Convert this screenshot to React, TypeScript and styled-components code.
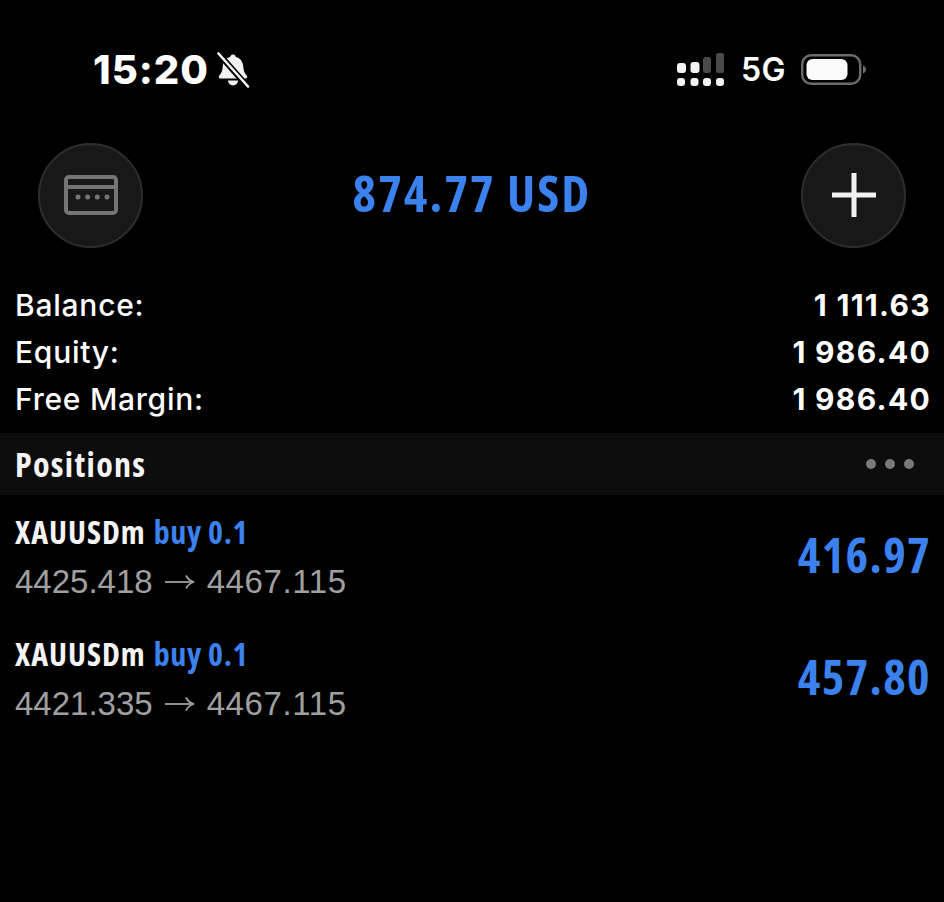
import React from "react";
import styled, { createGlobalStyle } from "styled-components";

const Global = createGlobalStyle`
  html, body { margin: 0; padding: 0; background: #000; }
  body { font-family: "Liberation Sans", Arial, sans-serif; }
`;

const Page = styled.div`
  width: 944px;
  height: 902px;
  background: #000;
  color: #fff;
  overflow: hidden;
`;

const StatusBar = styled.div`
  height: 142px;
  box-sizing: border-box;
  padding: 48px 77px 0 93px;
  display: flex;
  justify-content: space-between;
  align-items: flex-start;
`;

const StatusGroup = styled.div`
  display: flex;
  align-items: center;
  height: 44px;
`;

const Time = styled.span`
  font-family: "Inter", sans-serif;
  font-weight: 800;
  font-size: 40px;
  letter-spacing: 1px;
  line-height: 44px;
  color: #fff;
  margin-right: 7px;
`;

const Network = styled.span`
  font-family: "Inter", sans-serif;
  font-weight: 600;
  font-size: 32px;
  letter-spacing: 0.5px;
  line-height: 44px;
  margin: 0 15px 0 16px;
`;

const Header = styled.div`
  height: 106px;
  padding: 0 38px;
  display: flex;
  align-items: center;
  justify-content: space-between;
`;

const RoundButton = styled.div`
  width: 105px;
  height: 105px;
  box-sizing: border-box;
  border-radius: 50%;
  background: #181818;
  border: 2px solid #2e2e2e;
  display: flex;
  align-items: center;
  justify-content: center;
`;

const Total = styled.div`
  font-family: "Open Sans", sans-serif;
  font-stretch: 75%;
  font-weight: 700;
  font-size: 50px;
  letter-spacing: 2.2px;
  line-height: 60px;
  color: #3b82ee;
  margin-bottom: 4px;
`;

const Summary = styled.div`
  margin-top: 33px;
  padding: 0 13px 0 15px;
  display: flex;
  flex-direction: column;
`;

const SummaryRow = styled.div`
  height: 47px;
  display: flex;
  align-items: center;
  justify-content: space-between;
  font-family: "Inter", sans-serif;
  font-size: 30px;
  letter-spacing: 0.75px;
  font-weight: 500;
`;

const Amount = styled.span`
  font-weight: 700;
  letter-spacing: 1.3px;
`;

const SectionBand = styled.div`
  margin-top: 11px;
  height: 62px;
  background: #0d0d0d;
  padding: 0 30px 0 15px;
  display: flex;
  align-items: center;
  justify-content: space-between;
`;

const SectionTitle = styled.span`
  font-family: "Open Sans", sans-serif;
  font-stretch: 75%;
  font-weight: 700;
  font-size: 34px;
  letter-spacing: 1.3px;
  color: #f4f4f4;
`;

const Dots = styled.div`
  display: flex;
  gap: 9px;
`;

const Dot = styled.span`
  width: 10px;
  height: 10px;
  border-radius: 50%;
  background: #7a7a7a;
`;

const PositionList = styled.div`
  padding: 1px 13px 0 15px;
  display: flex;
  flex-direction: column;
`;

const PositionRow = styled.div`
  height: 122px;
  display: flex;
  align-items: center;
  justify-content: space-between;
`;

const PositionInfo = styled.div`
  display: flex;
  flex-direction: column;
`;

const PositionTitle = styled.div`
  font-family: "Open Sans", sans-serif;
  font-stretch: 75%;
  font-weight: 700;
  font-size: 32px;
  letter-spacing: 1px;
  line-height: 48px;
  margin-bottom: 2px;
  color: #f4f4f4;
`;

const BuyTag = styled.span`
  color: #3b82ee;
  letter-spacing: 0.6px;
  margin-left: 8px;
`;

const Prices = styled.div`
  font-family: "Liberation Sans", sans-serif;
  font-weight: 400;
  font-size: 33px;
  line-height: 48px;
  color: #a0a0a0;
  display: flex;
  align-items: center;
  gap: 12px;
`;

const ClosePrice = styled.span`
  letter-spacing: 0.6px;
`;

const Profit = styled.div`
  font-family: "Open Sans", sans-serif;
  font-stretch: 75%;
  font-weight: 700;
  font-size: 48px;
  letter-spacing: 1.4px;
  color: #3b82ee;
  margin-bottom: 6px;
`;

const BellOff = () => (
  <svg width="34" height="36" viewBox="0 0 34 36">
    <path d="M17 2.500c1.600 0 2.600 1 2.800 2.400 4.900 1.200 7.200 5 7.500 9.800.2 4 1.200 6.400 3.400 8.800 1.200 1.400.4 3-1.400 3H4.700c-1.800 0-2.600-1.600-1.400-3 2.200-2.400 3.200-4.800 3.400-8.800.3-4.800 2.600-8.600 7.500-9.800C14.400 3.500 15.400 2.500 17 2.500z" fill="#f2f2f2" />
    <path d="M12 28.500h10a5 5 0 0 1-10 0z" fill="#f2f2f2" />
    <path d="M2 1 L32 35" stroke="#000" strokeWidth="6" />
    <path d="M2.500 1.500 L32 34.500" stroke="#f2f2f2" strokeWidth="2.600" strokeLinecap="round" />
  </svg>
);

const Signal = () => (
  <svg width="48" height="36" viewBox="0 0 48 36" fill="#f2f2f2">
    <rect x="0" y="11" width="9" height="10" rx="3" />
    <rect x="13.500" y="10" width="9" height="11" rx="3" />
    <rect x="26" y="5" width="8" height="16" rx="2.500" fill="#4a4a4a" />
    <rect x="39" y="1" width="8" height="20" rx="2.500" fill="#4a4a4a" />
    <rect x="0" y="26" width="8" height="8" rx="3" />
    <rect x="13.500" y="26" width="8" height="8" rx="3" />
    <rect x="26" y="26" width="8" height="8" rx="3" />
    <rect x="39" y="26" width="8" height="8" rx="3" />
  </svg>
);

const Battery = () => (
  <svg width="66" height="32" viewBox="0 0 66 32">
    <rect x="1.200" y="1.200" width="58" height="28.600" rx="9" fill="none" stroke="#6c6c6c" strokeWidth="2.400" />
    <rect x="5.500" y="5" width="41" height="21" rx="6" fill="#fafafa" />
    <path d="M62 11.500c2.200 1 3 2.400 3 4s-.8 3-3 4z" fill="#6c6c6c" />
  </svg>
);

const CardIcon = () => (
  <svg width="54" height="40" viewBox="0 0 54 40">
    <rect x="2" y="2" width="50" height="36" rx="3" fill="none" stroke="#757575" strokeWidth="4" />
    <rect x="2" y="10" width="50" height="4" fill="#757575" />
    <g fill="#757575">
      <circle cx="14" cy="22" r="2.500" />
      <circle cx="23.700" cy="22" r="2.500" />
      <circle cx="33.300" cy="22" r="2.500" />
      <circle cx="43" cy="22" r="2.500" />
    </g>
  </svg>
);

const PlusIcon = () => (
  <svg width="44" height="44" viewBox="0 0 44 44">
    <rect x="19.500" y="0" width="5" height="44" fill="#f2f2f2" />
    <rect x="0" y="19.500" width="44" height="5" fill="#f2f2f2" />
  </svg>
);

const ArrowIcon = () => (
  <svg width="30" height="18" viewBox="0 0 30 18" fill="none" stroke="#a0a0a0" strokeWidth="1.800">
    <path d="M0 9h29" />
    <path d="M21 2.500c1.500 3 4 5.500 8 6.500-4 1-6.500 3.500-8 6.500" />
  </svg>
);

const summary = [
  ["Balance:", "1 111.63"],
  ["Equity:", "1 986.40"],
  ["Free Margin:", "1 986.40"],
];

const positions = [
  { open: "4425.418", close: "4467.115", profit: "416.97" },
  { open: "4421.335", close: "4467.115", profit: "457.80" },
];

export default function App() {
  return (
    <Page>
      <Global />
      <StatusBar>
        <StatusGroup>
          <Time>15:20</Time>
          <BellOff />
        </StatusGroup>
        <StatusGroup>
          <Signal />
          <Network>5G</Network>
          <Battery />
        </StatusGroup>
      </StatusBar>
      <Header>
        <RoundButton>
          <CardIcon />
        </RoundButton>
        <Total>874.77 USD</Total>
        <RoundButton>
          <PlusIcon />
        </RoundButton>
      </Header>
      <Summary>
        {summary.map(([label, value]) => (
          <SummaryRow key={label}>
            <span>{label}</span>
            <Amount>{value}</Amount>
          </SummaryRow>
        ))}
      </Summary>
      <SectionBand>
        <SectionTitle>Positions</SectionTitle>
        <Dots>
          <Dot />
          <Dot />
          <Dot />
        </Dots>
      </SectionBand>
      <PositionList>
        {positions.map((p) => (
          <PositionRow key={p.open}>
            <PositionInfo>
              <PositionTitle>
                XAUUSDm<BuyTag>buy 0.1</BuyTag>
              </PositionTitle>
              <Prices>
                <span>{p.open}</span>
                <ArrowIcon />
                <ClosePrice>{p.close}</ClosePrice>
              </Prices>
            </PositionInfo>
            <Profit>{p.profit}</Profit>
          </PositionRow>
        ))}
      </PositionList>
    </Page>
  );
}
